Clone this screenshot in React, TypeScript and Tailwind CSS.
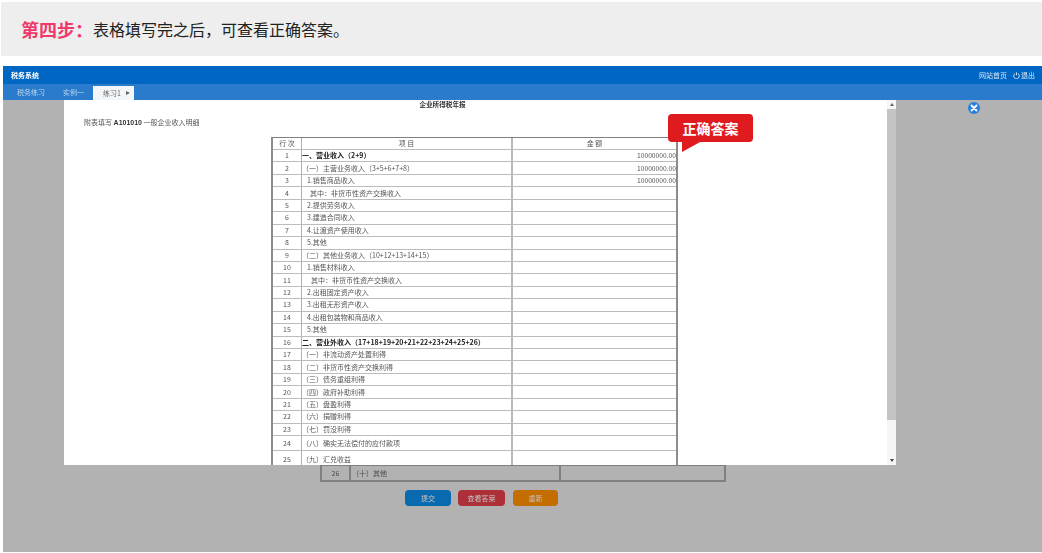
import React from "react";

const cjk = { fontFamily: '"Noto Sans CJK SC", "Liberation Sans", sans-serif' };

type Row = { n: number; t: string; b?: boolean; h?: string; v?: boolean; indent?: string };
const rows: Row[] = [
  { n: 1, t: "一、营业收入（2+9）", b: true, v: true },
  { n: 2, t: "（一）主营业务收入（3+5+6+7+8）", v: true },
  { n: 3, t: "1.销售商品收入", indent: "pl-[5px]", v: true },
  { n: 4, t: "其中：非货币性资产交换收入", indent: "pl-[8px]" },
  { n: 5, t: "2.提供劳务收入", indent: "pl-[5px]" },
  { n: 6, t: "3.建造合同收入", indent: "pl-[5px]" },
  { n: 7, t: "4.让渡资产使用收入", indent: "pl-[5px]" },
  { n: 8, t: "5.其他", indent: "pl-[5px]" },
  { n: 9, t: "（二）其他业务收入（10+12+13+14+15）" },
  { n: 10, t: "1.销售材料收入", indent: "pl-[5px]" },
  { n: 11, t: "其中：非货币性资产交换收入", indent: "pl-[9px]" },
  { n: 12, t: "2.出租固定资产收入", indent: "pl-[5px]" },
  { n: 13, t: "3.出租无形资产收入", indent: "pl-[5px]" },
  { n: 14, t: "4.出租包装物和商品收入", indent: "pl-[5px]" },
  { n: 15, t: "5.其他", indent: "pl-[5px]" },
  { n: 16, t: "二、营业外收入（17+18+19+20+21+22+23+24+25+26）", b: true },
  { n: 17, t: "（一）非流动资产处置利得" },
  { n: 18, t: "（二）非货币性资产交换利得" },
  { n: 19, t: "（三）债务重组利得" },
  { n: 20, t: "（四）政府补助利得" },
  { n: 21, t: "（五）盘盈利得" },
  { n: 22, t: "（六）捐赠利得" },
  { n: 23, t: "（七）罚没利得" },
  { n: 24, t: "（八）确实无法偿付的应付款项", h: "h-[15px]" },
  { n: 25, t: "（九）汇兑收益", h: "h-[18px]" },
];

function TableRow({ r }: { r: Row }) {
  return (
    <div className={`flex border-b border-[#bcbcbc] ${r.h ?? "h-[12.45px]"} leading-[11px]`}>
      <div className="w-[29px] shrink-0 border-r border-[#b0b0b0] flex items-center justify-center text-[#555]">{r.n}</div>
      <div className={`w-[211px] shrink-0 border-r-2 border-[#b8b8b8] flex items-center whitespace-nowrap overflow-hidden ${r.indent ?? ""} ${r.b ? "font-bold text-[#222]" : "text-[#555]"}`}>
        {r.t}
      </div>
      <div className="flex-1 flex items-center justify-end text-[#555] text-[6.7px]">{r.v ? "10000000.00" : ""}</div>
    </div>
  );
}

export default function App() {
  return (
    <div className="w-[1042px] h-[553px] overflow-hidden bg-white pt-[2px] pl-[1px]" style={cjk}>
      <div className="h-[54px] bg-[#eeeeee] flex items-center pl-[20px] pb-[1px]">
        <span className="text-[18px] font-bold text-[#f0386b] leading-none">第四步：</span>
        <span className="text-[16px] text-[#222] leading-none">表格填写完之后，可查看正确答案。</span>
      </div>

      <div className="mt-[10px] ml-[2px] h-[486px] flex flex-col relative">
        <div className="h-[18px] bg-[#0066c3] flex items-center justify-between pl-[8px] pr-[7px] text-white text-[7px] blur-[0.4px]">
          <span className="font-bold">税务系统</span>
          <div className="flex items-center gap-[6px] text-[#d6e6f6]">
            <span>网站首页</span>
            <span className="flex items-center gap-[1px]">
              <svg width="7" height="7" viewBox="0 0 10 10" fill="none" stroke="#e4effa" strokeWidth="1.3">
                <path d="M3 2.2a4 4 0 1 0 4 0" />
                <path d="M5 0.5v4" />
              </svg>
              退出
            </span>
          </div>
        </div>
        <div className="h-[16px] bg-[#2a7bcb] flex items-end text-[7px] text-[#bcd6f0] blur-[0.4px]">
          <span className="w-[60px] pl-[14px] h-full flex items-center">税务练习</span>
          <span className="w-[30px] h-full flex items-center">实例一</span>
          <div className="w-[41px] h-[14px] bg-[#f3f6f9] text-[#666] flex items-center pl-[10px] gap-[5px]">
            练习1
            <span className="w-0 h-0 border-y-[2.5px] border-y-transparent border-l-[4px] border-l-[#666]" />
          </div>
        </div>

        <div className="flex-1 bg-[#b2b2b2] flex flex-col items-start pt-[364px] pl-[317px] text-[7px] blur-[0.4px]">
          <div className="w-[406px] h-[18px] border-2 border-[#808080] flex text-[#4a4a4a]">
            <div className="w-[29px] border-r-2 border-[#808080] flex items-center justify-center">26</div>
            <div className="w-[210px] border-r-2 border-[#808080] flex items-center pl-[1px]">（十）其他</div>
          </div>
          <div className="flex mt-[8px] ml-[85px] text-[#c4c4c4]">
            <div className="w-[46px] h-[16px] rounded-[4px] bg-[#0a6ab0] flex items-center justify-center">提交</div>
            <div className="w-[47px] h-[16px] rounded-[4px] bg-[#ad3038] flex items-center justify-center ml-[7px]">查看答案</div>
            <div className="w-[45px] h-[16px] rounded-[4px] bg-[#c46d00] flex items-center justify-center ml-[8px]">重新</div>
          </div>
        </div>

        <div className="absolute left-[61px] top-[34px] w-[832px] h-[365px] bg-white flex overflow-hidden">
          <div className="flex-1 overflow-hidden text-[7px] blur-[0.4px]">
            <div className="w-[757px] text-center font-bold text-[6.6px] text-[#333] leading-[9px]">企业所得税年报</div>
            <div className="pl-[20px] pt-[9px] h-[28px] text-[#555] leading-[9px]">
              附表填写 <span className="font-bold text-[#333]" style={{ fontFamily: '"Liberation Sans", sans-serif' }}>A101010</span> 一般企业收入明细
            </div>
            <div className="ml-[207px] w-[407px] border-x-2 border-t border-x-[#8c8c8c] border-t-[#808080]">
              <div className="flex h-[12px] border-b border-[#bcbcbc] leading-[11px] text-[#555]">
                <div className="w-[29px] shrink-0 border-r border-[#b0b0b0] flex items-center justify-center">行 次</div>
                <div className="w-[211px] shrink-0 border-r-2 border-[#b8b8b8] flex items-center justify-center">项 目</div>
                <div className="flex-1 flex items-center justify-center">金 额</div>
              </div>
              {rows.map((r) => (
                <TableRow key={r.n} r={r} />
              ))}
            </div>
          </div>
          <div className="w-[9px] bg-[#f6f6f6] flex flex-col items-center shrink-0">
            <div className="h-[9px] flex items-center">
              <span className="w-0 h-0 border-x-[2px] border-x-transparent border-b-[3px] border-b-[#666]" />
            </div>
            <div className="w-full h-[311px] bg-[#c4c4c4]" />
            <div className="flex-1" />
            <div className="h-[9px] flex items-center">
              <span className="w-0 h-0 border-x-[2px] border-x-transparent border-t-[3px] border-t-[#444]" />
            </div>
          </div>
        </div>

        <div className="absolute left-[965px] top-[36px] w-[12px] h-[12px] rounded-full bg-[#2a7fdc] flex items-center justify-center">
          <svg width="8" height="8" viewBox="0 0 8 8" stroke="white" strokeWidth="1.8" strokeLinecap="round">
            <path d="M1.5 1.5l5 5M6.5 1.5l-5 5" />
          </svg>
        </div>

        <div className="absolute left-[665px] top-[48px] w-[85px] h-[38px]">
          <div className="h-[28px] rounded-[4px] bg-[#e01b20] text-white text-[14px] font-bold flex items-center justify-center leading-none">
            正确答案
          </div>
          <svg className="absolute left-[14px] top-[27px]" width="22" height="11" viewBox="0 0 22 11">
            <path d="M0 0 L20 0 L0 11 Z" fill="#e01b20" />
          </svg>
        </div>
      </div>
    </div>
  );
}
